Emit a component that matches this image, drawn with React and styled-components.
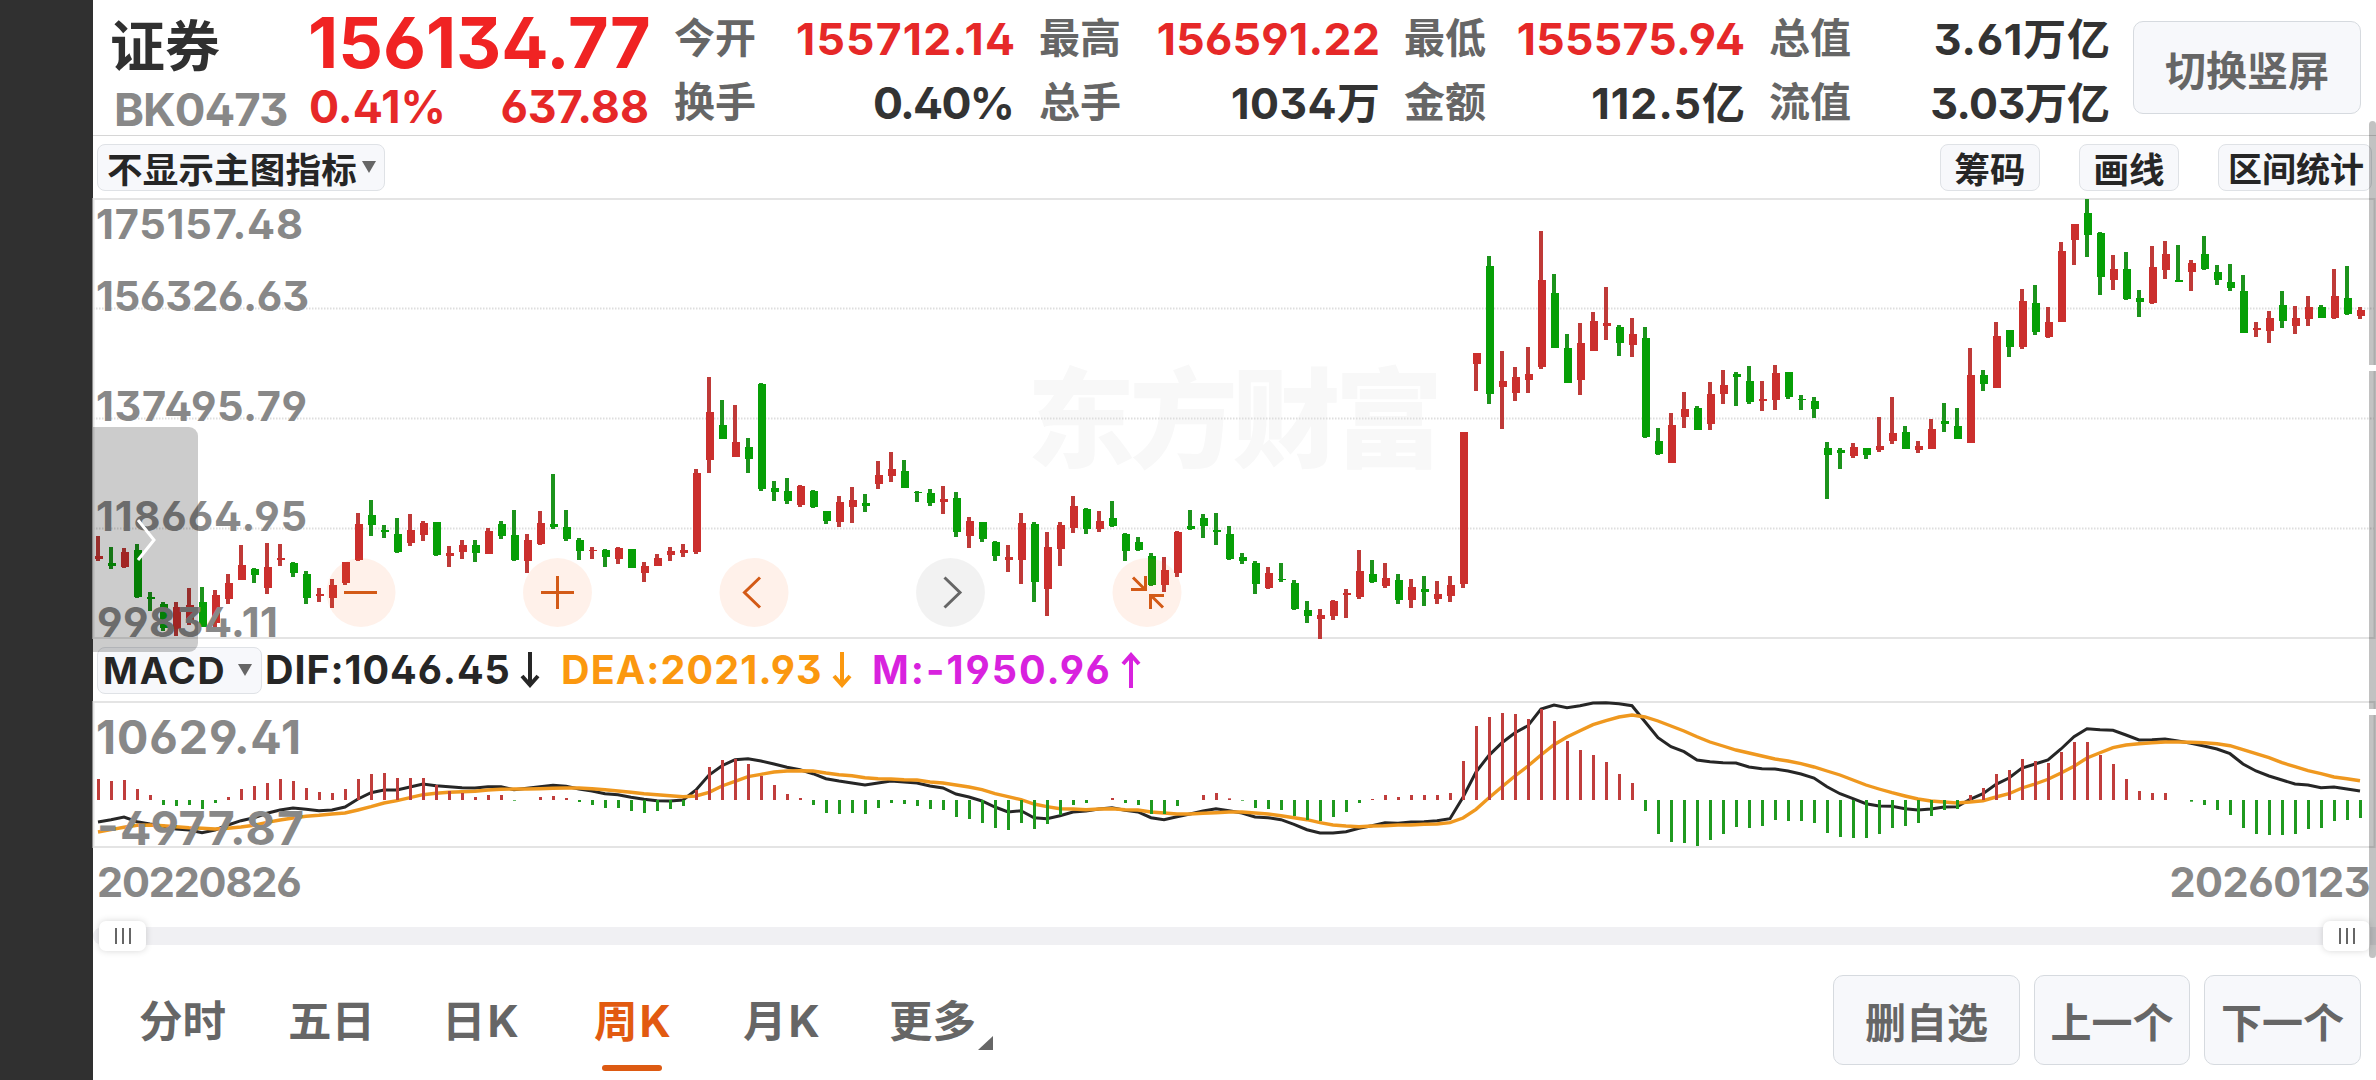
import React from 'react';
import styled, { createGlobalStyle } from 'styled-components';

const GlobalStyle = createGlobalStyle`
  * { box-sizing: border-box; }
  html, body { margin: 0; padding: 0; background: #fff; }
  body { overflow: hidden; }
`;

const FONT = '"Inter", "Noto Sans CJK SC", sans-serif';
const RED = '#e62828';
const UP = '#cb2f2d';
const DOWN = '#069f06';
const UP_THIN = '#bf3a38';
const DOWN_THIN = '#1c931c';

/* colour, high, body top, body bottom, low (thirds of a pixel from `base`) */
const CANDLES_A = `r 1038 1098 1107 1113|g 1071 1118 1128 1137|r 1075 1087 1131 1133|g 1062 1081 1221 1223|g 1207 1222 1228 1263|g 1237 1243 1313 1323|r 1236 1250 1316 1338|r 1194 1245 1300 1305|g 1190 1237 1310 1310|r 1200 1214 1300 1310|r 1151 1178 1227 1242|r 1064 1125 1171 1171|g 1135 1137 1154 1178|r 1060 1131 1194 1212|r 1062 1105 1110 1128|g 1116 1118 1149 1161|g 1144 1151 1224 1241|r 1195 1212 1218 1235|r 1166 1186 1224 1254|r 1117 1117 1178 1184|r 968 1002 1111 1114|g 930 976 1005 1038|g 1006 1021 1027 1043|g 984 1032 1087 1089|r 971 1019 1060 1067|r 994 998 1036 1054|g 996 996 1095 1097|r 1068 1088 1099 1132|r 1049 1065 1086 1106|g 1051 1065 1088 1115|r 1015 1023 1091 1091|g 992 1003 1038 1048|g 960 1035 1111 1112|r 1032 1049 1113 1148|r 962 999 1062 1064|g 852 1003 1011 1018|g 961 1011 1048 1053|g 1043 1050 1083 1111|r 1070 1079 1083 1108|g 1077 1080 1102 1131|r 1070 1074 1107 1122|g 1077 1077 1134 1134|r 1117 1128 1149 1176`;
const CANDLES_B = `r 641 654 678 678|r 621 633 645 662|r 612 629 638 651|r 388 399 635 641|r 110 216 360 399|g 180 255 297 298|r 196 306 350 350|g 293 322 358 399|g 129 131 447 452|g 424 444 456 482|g 414 454 483 492|r 435 437 495 502|g 451 452 501 504|g 512 514 543 552|r 468 486 545 560|r 442 480 500 548|g 462 489 499 516|r 363 404 431 446|r 337 388 408 425|g 359 392 443 445|g 453 455 459 486|g 447 459 490 498|r 438 477 486 521|g 457 474 577 590|r 530 543 588 625|g 545 546 597 605|g 603 605 648 664|r 616 652 661 695|r 519 548 661 732|g 545 552 725 785|r 577 621 748 828|r 545 556 627 678|r 469 498 564 579|g 504 506 567 581|r 513 543 567 577|g 482 533 558 560|g 579 581 632 664|g 591 605 630 632|g 640 648 735 737|r 651 691 734 756|r 573 577 698 711|g 511 558 567 569|g 522 534 559 594|g 520 570 576 614|g 558 582 657 659|g 639 651 663 672|g 663 670 732 763|r 681 698 743 748|g 668 716 719 726|g 720 730 806 809|g 782 810 829 849|r 808 825 837 897|r 781 783 828 839|r 748 760 765 833|r 631 694 771 776|g 661 702 726 728|r 670 713 738 743|g 701 720 779 793|r 717 740 779 803|g 707 746 755 797|r 724 761 776 791|r 707 734 768 786|r 276 276 732 744`;
const CANDLES_C = `r 489 489 522 603|g 198 228 612 641|r 482 573 591 718|r 530 562 608 633|r 472 553 569 609|r 123 270 531 538|g 253 310 473 474|g 433 474 578 578|r 399 459 570 616|r 367 393 482 484|r 291 398 408 450|g 405 411 458 499|r 385 432 466 500|g 412 443 740 744|g 713 753 792 794|r 670 705 820 820|r 606 658 682 713|g 648 653 719 719|r 575 612 703 721|r 541 585 613 643|g 547 551 562 648|g 529 573 636 641|r 574 626 634 663|r 525 549 629 661|g 546 546 621 628|g 615 627 630 660|g 621 634 657 684|g 755 773 794 928|g 775 780 789 837|r 758 770 797 804|g 773 775 795 807|r 681 768 781 785|r 622 728 753 762|g 708 727 777 778|r 754 767 781 789|r 686 717 777 778|g 639 693 702 726|g 654 707 746 746|r 475 554 758 759|g 539 555 581 604|r 395 439 593 594|g 420 420 470 502|r 298 334 472 476|g 286 339 426 434|r 351 395 441 445|r 156 184 396 397|r 101 102 149 225|g 27 68 135 202|g 126 129 261 314|r 194 237 270 301|g 185 238 327 331|g 299 325 335 381|r 167 232 339 341|r 154 192 241 267|g 165 269 275 277|r 210 220 246 302|g 138 192 237 239|g 226 247 271 284|g 223 276 293 304|g 255 302 429 430|r 397 414 419 440|r 363 383 424 459|g 303 346 392 414|r 349 385 409 432|r 319 350 386 408|g 346 352 384 384|r 238 317 384 386|g 229 323 372 375|r 352 361 378 387`;

const parse = (src, base) =>
  src.split('|').map((row) => {
    const [c, ...v] = row.split(' ');
    return [c, ...v.map((n) => Math.round(base + Number(n) / 3))];
  });

const CANDLES = [...parse(CANDLES_A, -8), ...parse(CANDLES_B, 142), ...parse(CANDLES_C, -8)];

const BARS = [63,57,60,33,15,-15,-18,-15,-27,-9,9,33,42,51,63,57,36,24,21,33,63,78,81,66,66,66,45,27,21,9,15,15,-2,0,9,12,6,-6,-15,-24,-24,-33,-39,-33,-27,-18,30,99,120,123,108,72,45,18,6,-15,-39,-42,-39,-42,-24,-9,-12,-18,-27,-30,-51,-57,-69,-84,-90,-69,-87,-72,-45,-15,-9,0,6,-9,-15,-42,-42,-18,0,15,21,5,-2,-24,-27,-30,-48,-60,-63,-51,-36,-9,3,15,9,15,15,15,21,117,222,249,261,258,243,273,237,177,150,135,114,78,51,-33,-102,-126,-129,-138,-120,-102,-81,-84,-78,-60,-63,-63,-69,-99,-111,-114,-114,-102,-84,-78,-69,-48,-30,-27,15,36,78,90,123,117,111,144,174,174,135,108,63,27,21,21,0,-5,-15,-30,-45,-84,-102,-105,-105,-102,-87,-84,-63,-60,-54];

const DIF = [396,389,381,395,402,408,417,420,428,420,405,392,383,370,360,354,358,362,360,351,327,308,300,300,291,282,287,290,293,294,290,290,299,295,290,286,289,297,303,311,314,322,328,332,333,330,300,255,227,209,206,213,222,232,239,251,266,273,279,285,279,273,276,279,288,294,312,321,333,351,366,362,383,386,377,366,363,357,353,361,366,383,389,380,372,363,356,362,369,381,383,389,403,419,429,429,425,415,407,398,400,396,395,392,386,322,246,196,158,128,107,57,45,53,47,39,38,41,47,95,143,170,185,210,215,218,219,231,236,237,243,252,264,290,311,326,341,348,349,356,360,357,351,350,328,311,283,264,234,222,210,177,140,116,119,121,135,150,149,147,153,160,168,177,191,222,243,258,270,282,285,293,291,297,303];

const DEA = [426,419,412,406,405,407,410,413,415,417,415,411,406,397,390,384,379,376,372,369,360,350,339,332,323,314,310,307,305,304,300,298,297,297,296,295,294,294,296,299,303,307,311,314,317,320,318,307,288,274,260,253,246,243,242,243,249,254,257,263,266,267,269,270,276,279,285,291,299,311,320,329,342,350,356,357,359,357,356,359,360,366,369,372,372,370,368,366,366,369,372,377,383,389,398,405,408,410,408,407,405,405,403,402,398,384,358,323,290,258,228,195,164,141,122,104,92,81,75,81,93,108,123,140,156,168,180,189,198,207,213,221,231,243,255,270,285,297,308,318,327,333,336,339,336,332,321,311,294,282,268,249,229,204,188,173,165,161,158,156,156,157,158,161,167,179,191,203,218,230,242,251,261,266,272];

const STEP = 13;
const X0 = 5;

const Screen = styled.div`
  display: flex;
  position: relative;
  width: 2376px;
  height: 1080px;
  overflow: hidden;
  background: #fff;
  font-family: ${FONT};
  font-feature-settings: 'ss01' 1;
  color: #333;
  white-space: nowrap;
`;
const Notch = styled.div`flex: 0 0 93px; background: #303030;`;
const Page = styled.main`flex: 1; min-width: 0; display: flex; flex-direction: column;`;

const Header = styled.header`
  display: flex;
  height: 136px;
  flex: none;
  border-bottom: 1px solid #d6d6d6;
  padding: 7px 15px 0 17px;
`;
const NameBlock = styled.div`width: 198px;`;
const StockName = styled.div`
  font-size: 55px; line-height: 78px; height: 78px; font-weight: 700; color: #303030;
`;
const StockCode = styled.div`
  font-size: 45.5px; line-height: 49px; padding-left: 4px; font-weight: 700; color: #888; letter-spacing: -1px;
`;
const PriceBlock = styled.div`width: 342px;`;
const Price = styled.div`
  font-size: 70px; line-height: 72px; height: 76px; font-weight: 700; color: #f02323;
`;
const Change = styled.div`
  display: flex; justify-content: space-between; padding: 0 1px 0 1px;
  font-size: 44.7px; line-height: 49px; font-weight: 700; color: ${RED};
`;
const Stats = styled.div`
  display: grid;
  grid-template-columns: repeat(4, 339px);
  grid-auto-rows: 64px;
  column-gap: 26px;
  margin-left: 24px;
`;
const Stat = styled.div`
  display: flex; justify-content: space-between; line-height: 64px;
`;
const StatLabel = styled.span`font-size: 41px; font-weight: 700; color: #666; line-height: 62px;`;
const StatValue = styled.span`
  font-size: ${(p) => p.$size}px; font-weight: 700; color: ${(p) => (p.$up ? RED : '#333')};
  letter-spacing: ${(p) => p.$track || 0}px;
  margin-right: ${(p) => -(p.$track || 0) - 2}px;
`;
const SoftButton = styled.button`
  display: flex; align-items: center; justify-content: center;
  flex: none;
  width: ${(p) => p.$w}px;
  height: ${(p) => p.$h}px;
  padding: 0;
  border: 1px solid #d6dadf;
  border-radius: 10px;
  background: #f7f8fb;
  color: #666;
  font: 700 41px ${FONT};
`;
const RotateSlot = styled.div`margin: 14px 0 0 auto;`;

const Toolbar = styled.div`
  display: flex; align-items: center;
  flex: none; height: 62px; padding: 0 4px 0 4px;
`;
const Chip = styled.button`
  display: flex; align-items: center; justify-content: ${(p) => (p.$start ? 'flex-start' : 'center')};
  flex: none;
  width: ${(p) => p.$w}px; height: 47px;
  margin: 0 ${(p) => p.$mr || 0}px 0 ${(p) => p.$ml || 0}px;
  padding: 0 0 0 ${(p) => p.$pl || 0}px;
  border: 1px solid #dfe2e6;
  border-radius: 8px;
  background: #f7f8fb;
  color: #262626;
  font: 700 ${(p) => p.$size || 35.5}px ${FONT};
  letter-spacing: ${(p) => p.$track || 0}px;
`;
const Grow = styled.div`flex: 1;`;
const Caret = styled.i`
  border: 7.5px solid transparent; border-top: 12px solid #666; border-bottom: 0;
  margin-left: ${(p) => p.$ml}px;
`;

const Plot = styled.svg`display: block; flex: none; width: 2283px; height: ${(p) => p.height}px; overflow: visible;`;
const Axis = styled.text`font-family: ${FONT}; font-weight: 700; font-size: ${(p) => p.$size}px; fill: #888;`;
const Watermark = styled.text`font-family: "Noto Sans CJK SC", sans-serif; font-weight: 900; font-size: 108px; fill: #f8f8f8;`;

const IndicatorRow = styled.div`
  display: flex; align-items: center; flex: none; height: 62px; padding: 0 0 0 4px;
`;
const Reading = styled.span`
  display: flex; align-items: center;
  width: ${(p) => p.$w}px;
  color: ${(p) => p.$color};
  font-size: 39.5px; font-weight: 700;
  letter-spacing: ${(p) => p.$track || 0}px;
`;
const ArrowIcon = styled.svg`margin-left: 9px; flex: none;`;

const DateRow = styled.div`
  display: flex; justify-content: space-between; flex: none;
  height: 79px; padding: 9px 6px 0 4px;
  font-size: 41.5px; line-height: 50px; font-weight: 700; color: #888;
`;
const DateLabel = styled.span`letter-spacing: ${(p) => p.$track}px;`;
const Range = styled.div`
  display: flex; align-items: center; justify-content: space-between;
  flex: none; height: 18px; padding: 0 6px; background: #f0f0f3; border-radius: 9px 0 0 9px;
`;
const Handle = styled.div`
  display: flex; align-items: center; justify-content: center; gap: 5px;
  width: 47px; height: 30px; border-radius: 7px; background: #fff;
  box-shadow: 0 0 7px rgba(0, 0, 0, 0.16);
`;
const Grip = styled.i`width: 2px; height: 16px; background: #666;`;

const Footer = styled.footer`display: flex; flex: 1; align-items: flex-start; padding: 30px 15px 0 46px;`;
const Tab = styled.div`
  display: flex; flex-direction: column;
  width: ${(p) => p.$w}px;
  font-size: 43.5px; line-height: 92px; font-weight: 700; letter-spacing: ${(p) => p.$track || 0}px;
  color: ${(p) => (p.$active ? '#e25a10' : '#666')};
`;
const Underline = styled.i`width: 60px; height: 6px; margin: -2px 0 0 8px; border-radius: 3px; background: #dd5a12;`;
const Corner = styled.i`
  border-left: 15px solid transparent; border-bottom: 14px solid #666; margin-top: 61px;
`;
const Actions = styled.div`display: flex; gap: 14px; margin-left: auto;`;

const Drawer = styled.div`
  position: absolute; left: 93px; top: 427px; width: 105px; height: 225px;
  border-radius: 0 9px 9px 0; background: rgba(0, 0, 0, 0.2);
  display: flex; align-items: center; justify-content: center;
`;
const ScrollTrack = styled.div`
  position: absolute; right: 0; top: 121px; width: 7px; display: flex; flex-direction: column;
`;
const ScrollPiece = styled.i`
  height: ${(p) => p.$h}px; background: rgba(0, 0, 0, 0.24);
  border-radius: ${(p) => p.$r || '0'};
`;
const ScrollGap = styled.i`height: 6px; background: #fff;`;

function Arrow({ up }) {
  return (
    <ArrowIcon width="20" height="36" viewBox="0 0 20 36" fill="none" stroke="currentColor" strokeWidth="4">
      {up ? <path d="M10 36V3M2 12l8-9 8 9" /> : <path d="M10 0v33M2 24l8 9 8-9" />}
    </ArrowIcon>
  );
}

function PriceChart() {
  const labels = [
    ['175157.48', 41, 3, 207], ['156326.63', 113, 3, 213], ['137495.79', 223, 3, 211],
    ['118664.95', 333, 3, 211], ['99834.11', 439, 4, 181],
  ];
  const stroke = '#d35a17';
  return (
    <Plot height="441" viewBox="0 0 2283 441">
      <Watermark x="934" y="261" textLength="416">东方财富</Watermark>
      {[111, 221, 331].map((y) => (
        <line key={y} x1="0" x2="2283" y1={y - 0.5} y2={y - 0.5} stroke="#dedede" strokeWidth="2" strokeDasharray="1.5 1.5" />
      ))}
      <rect x="0.5" y="1" width="2281" height="439" fill="none" stroke="#e4e4e4" strokeWidth="2" />
      {CANDLES.map(([c, h, t, b, l], i) => {
        const x = X0 + i * STEP;
        return (
          <g key={i}>
            <rect x={x - 2} y={h} width="4" height={Math.max(l - h, 1)} fill={c === 'r' ? UP_THIN : DOWN_THIN} />
            <rect x={x - 3} y={t} width="8" height={Math.max(b - t, 1)} fill={c === 'r' ? UP : DOWN} />
          </g>
        );
      })}
      {labels.map(([s, y, x, w]) => (
        <Axis key={s} x={x} y={y} $size={41.5} textLength={w}>{s}</Axis>
      ))}
      {[268, 464.5, 661, 857.5, 1054].map((cx, i) => (
        <circle key={cx} cx={cx} cy="394.5" r="34.5" fill={i === 3 ? 'rgba(0,0,0,.05)' : 'rgba(250,104,20,.09)'} />
      ))}
      <g fill="none" stroke={stroke} strokeWidth="3">
        <path d="M251 394.5h33" />
        <path d="M448 394.5h33M464.5 378v33" />
        <path d="M667 379.5l-15.5 15l15.5 15" />
        <path d="M851.5 379.5l15.5 15l-15.5 15" stroke="#666" />
        <path d="M1040 379.5l12 12M1038 391.5h14.5V378M1070 409.5l-12-12M1057.5 411V397.5H1071" />
      </g>
    </Plot>
  );
}

function MacdChart() {
  const pts = (a) => a.map((v, i) => `${X0 + i * STEP},${(v / 3 - 11).toFixed(1)}`).join(' ');
  return (
    <Plot height="147" viewBox="0 0 2283 147">
      <rect x="0.5" y="1" width="2281" height="145" fill="none" stroke="#e4e4e4" strokeWidth="2" />
      <polyline points={pts(DIF)} fill="none" stroke="#262626" strokeWidth="3" />
      <polyline points={pts(DEA)} fill="none" stroke="#ef981f" strokeWidth="3.4" />
      {BARS.map((v, i) => (
        <rect key={i} x={X0 + i * STEP - 1} width="3" y={v > 0 ? 99 - v / 3 : 99} height={Math.abs(v) / 3} fill={v > 0 ? '#c03e3c' : '#1f991f'} />
      ))}
      <Axis x="3" y="53" $size={46.5} textLength="205">10629.41</Axis>
      <Axis x="4" y="144" $size={46.5} textLength="207">-4977.87</Axis>
    </Plot>
  );
}

/* label, value, rising, font size, tracking */
const STATS = [
  ['今开', '155712.14', true, 44.5, 1.2], ['最高', '156591.22', true, 44.5, 0.3],
  ['最低', '155575.94', true, 44.5, 0.3], ['总值', '3.61万亿', false, 43, 0.8],
  ['换手', '0.40%', false, 44.5, -1.7], ['总手', '1034万', false, 43, 0.4],
  ['金额', '112.5亿', false, 43, 1], ['流值', '3.03万亿', false, 43, -0.6],
];

function Grips() {
  return <Handle><Grip /><Grip /><Grip /></Handle>;
}

export default function App() {
  return (
    <Screen>
      <GlobalStyle />
      <Notch />
      <Page>
        <Header>
          <NameBlock>
            <StockName>证券</StockName>
            <StockCode>BK0473</StockCode>
          </NameBlock>
          <PriceBlock>
            <Price>156134.77</Price>
            <Change><span>0.41%</span><span>637.88</span></Change>
          </PriceBlock>
          <Stats>
            {STATS.map(([label, value, up, size, track]) => (
              <Stat key={label}>
                <StatLabel>{label}</StatLabel>
                <StatValue $up={up} $size={size} $track={track}>{value}</StatValue>
              </Stat>
            ))}
          </Stats>
          <RotateSlot><SoftButton $w={228} $h={93}>切换竖屏</SoftButton></RotateSlot>
        </Header>
        <Toolbar>
          <Chip $w={288} $start $pl={9} $track={0.2}>不显示主图指标<Caret $ml={5} /></Chip>
          <Grow />
          <Chip $w={100}>筹码</Chip>
          <Chip $w={100} $ml={39}>画线</Chip>
          <Chip $w={154} $ml={39} $size={34} $pl={2}>区间统计</Chip>
        </Toolbar>
        <PriceChart />
        <IndicatorRow>
          <Chip $w={165} $mr={3} $start $pl={5} $size={37.5} $track={1.8}>MACD<Caret $ml={12} /></Chip>
          <Reading $w={296} $color="#262626" $track={0.9}>DIF:1046.45<Arrow /></Reading>
          <Reading $w={311} $color="#fb980f" $track={1.1}>DEA:2021.93<Arrow /></Reading>
          <Reading $color="#d822de" $w={280} $track={2}>M:-1950.96<Arrow up /></Reading>
        </IndicatorRow>
        <MacdChart />
        <DateRow><DateLabel $track={-1.2}>20220826</DateLabel><DateLabel $track={-0.5}>20260123</DateLabel></DateRow>
        <Range><Grips /><Grips /></Range>
        <Footer>
          <Tab $w={149}>分时</Tab>
          <Tab $w={154}>五日</Tab>
          <Tab $w={152} $track={2}>日K</Tab>
          <Tab $w={149} $active $track={2}>周K<Underline /></Tab>
          <Tab $w={146} $track={2}>月K</Tab>
          <Tab $w={89}>更多</Tab>
          <Corner />
          <Actions>
            <SoftButton $w={187} $h={90}>删自选</SoftButton>
            <SoftButton $w={156} $h={90}>上一个</SoftButton>
            <SoftButton $w={157} $h={90}>下一个</SoftButton>
          </Actions>
        </Footer>
      </Page>
      <Drawer>
        <svg width="20" height="42" viewBox="0 0 20 42" fill="none" stroke="#fff" strokeWidth="3">
          <path d="M2 1l16 20L2 41" />
        </svg>
      </Drawer>
      <ScrollTrack>
        <ScrollPiece $h={244} $r="4px 4px 0 0" />
        <ScrollGap />
        <ScrollPiece $h={338} />
        <ScrollGap />
        <ScrollPiece $h={243} $r="0 0 4px 4px" />
      </ScrollTrack>
    </Screen>
  );
}
